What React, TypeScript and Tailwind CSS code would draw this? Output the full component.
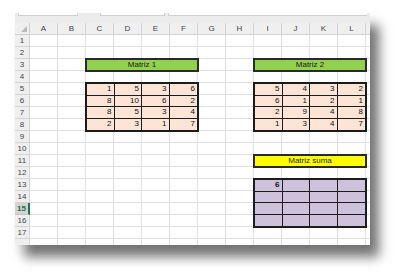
const cols = ["A", "B", "C", "D", "E", "F", "G", "H", "I", "J", "K", "L"];
const rows = Array.from({ length: 17 }, (_, i) => i + 1);

const matriz1 = [
  [1, 5, 3, 6],
  [8, 10, 6, 2],
  [8, 5, 3, 4],
  [2, 3, 1, 7],
];
const matriz2 = [
  [5, 4, 3, 2],
  [6, 1, 2, 1],
  [2, 9, 4, 8],
  [1, 3, 4, 7],
];
const suma = [
  ["6", "", "", ""],
  ["", "", "", ""],
  ["", "", "", ""],
  ["", "", "", ""],
];

function Block({
  data,
  bg,
  className,
  boldFirst = false,
}: {
  data: (number | string)[][];
  bg: string;
  className: string;
  boldFirst?: boolean;
}) {
  return (
    <div
      className={`${className} row-span-4 col-span-4 -m-px border-2 border-[#1c1c1c] grid grid-cols-4 grid-rows-4 ${bg} z-10`}
    >
      {data.flatMap((r, ri) =>
        r.map((v, ci) => (
          <div
            key={`${ri}-${ci}`}
            className={`flex items-center justify-end pr-[2px] text-[8px] leading-none text-[#111] ${
              ci < 3 ? "border-r border-[#1c1c1c]" : ""
            } ${ri < 3 ? "border-b border-[#1c1c1c]" : ""} ${
              boldFirst && ri === 0 && ci === 0 ? "font-bold" : ""
            }`}
          >
            {v}
          </div>
        ))
      )}
    </div>
  );
}

function Label({ text, bg, className }: { text: string; bg: string; className: string }) {
  return (
    <div
      className={`${className} col-span-4 -m-px border-2 border-[#2a2a2a] ${bg} flex items-center justify-center text-[8px] leading-none text-[#1a1a1a] z-10`}
    >
      {text}
    </div>
  );
}

export default function App() {
  const covered = (r: number, c: number) => {
    // c: 0 = A
    const left = c >= 2 && c <= 5;
    const right = c >= 8 && c <= 11;
    if (r === 3 && (left || right)) return true;
    if (r >= 5 && r <= 8 && (left || right)) return true;
    if (r === 11 && right) return true;
    if (r >= 13 && r <= 16 && right) return true;
    return false;
  };

  return (
    <div
      className="w-[400px] h-[276px] bg-white pt-[13px] pl-[15px]"
      style={{ fontFamily: '"Liberation Sans", Arial, sans-serif' }}
    >
      <div className="w-[355px] h-[232px] bg-white overflow-hidden flex flex-col shadow-[9px_12px_11px_rgba(0,0,0,0.55)]">
        {/* formula bar strip */}
        <div className="h-[10px] bg-[#ececec] flex items-start gap-[3px] px-[3px] shrink-0">
          <div className="w-[60px] h-[3px] bg-white border-b border-x border-[#cfcfcf] rounded-b-[1px]" />
          <div className="w-[16px]" />
          <div className="w-[65px] h-[3px] bg-white border-b border-x border-[#cfcfcf] rounded-b-[1px]" />
          <div className="flex-1 h-[3px] bg-white border-b border-l border-[#cfcfcf]" />
        </div>

        <div className="grid grid-cols-[15px_repeat(12,28px)_4px] grid-rows-[12px_repeat(17,12px)_6px]">
          {/* corner */}
          <div className="bg-[#efefef] border-r border-b border-[#cfcfcf] flex items-end justify-end p-[2px]">
            <svg width="6" height="6" viewBox="0 0 6 6">
              <polygon points="6,0 6,6 0,6" fill="#b9b9b9" />
            </svg>
          </div>
          {cols.map((c) => (
            <div
              key={c}
              className="bg-[#efefef] border-r border-b border-[#d4d4d4] flex items-center justify-center text-[8px] text-[#444]"
            >
              {c}
            </div>
          ))}
          <div className="bg-[#efefef] border-b border-[#d4d4d4]" />

          {rows.map((r) => (
            <div key={r} className="contents">
              <div
                className={`border-b flex items-center justify-center text-[8px] ${
                  r === 15
                    ? "bg-[#d3d3d3] text-[#217346] font-bold border-r-2 border-r-[#217346] border-b-[#c4c4c4]"
                    : "bg-[#efefef] text-[#444] border-r border-[#d4d4d4]"
                }`}
              >
                {r}
              </div>
              {cols.map((c, ci) =>
                covered(r, ci) ? null : (
                  <div key={c} className="border-r border-b border-[#e0e0e0]" />
                )
              )}
              <div className="border-b border-[#e0e0e0]" />
            </div>
          ))}

          <div className="bg-[#efefef] border-r border-[#d4d4d4]" />
          {cols.map((c) => (
            <div key={c} className="border-r border-[#e0e0e0]" />
          ))}
          <div />

          <Label text="Matriz 1" bg="bg-[#92d050]" className="col-start-4 row-start-4" />
          <Label text="Matriz 2" bg="bg-[#92d050]" className="col-start-10 row-start-4" />
          <Label text="Matriz suma" bg="bg-[#ffff00]" className="col-start-10 row-start-12" />
          <Block data={matriz1} bg="bg-[#fce4d6]" className="col-start-4 row-start-6" />
          <Block data={matriz2} bg="bg-[#fce4d6]" className="col-start-10 row-start-6" />
          <Block data={suma} bg="bg-[#cdc1dc]" className="col-start-10 row-start-14" boldFirst />
        </div>
      </div>
    </div>
  );
}
